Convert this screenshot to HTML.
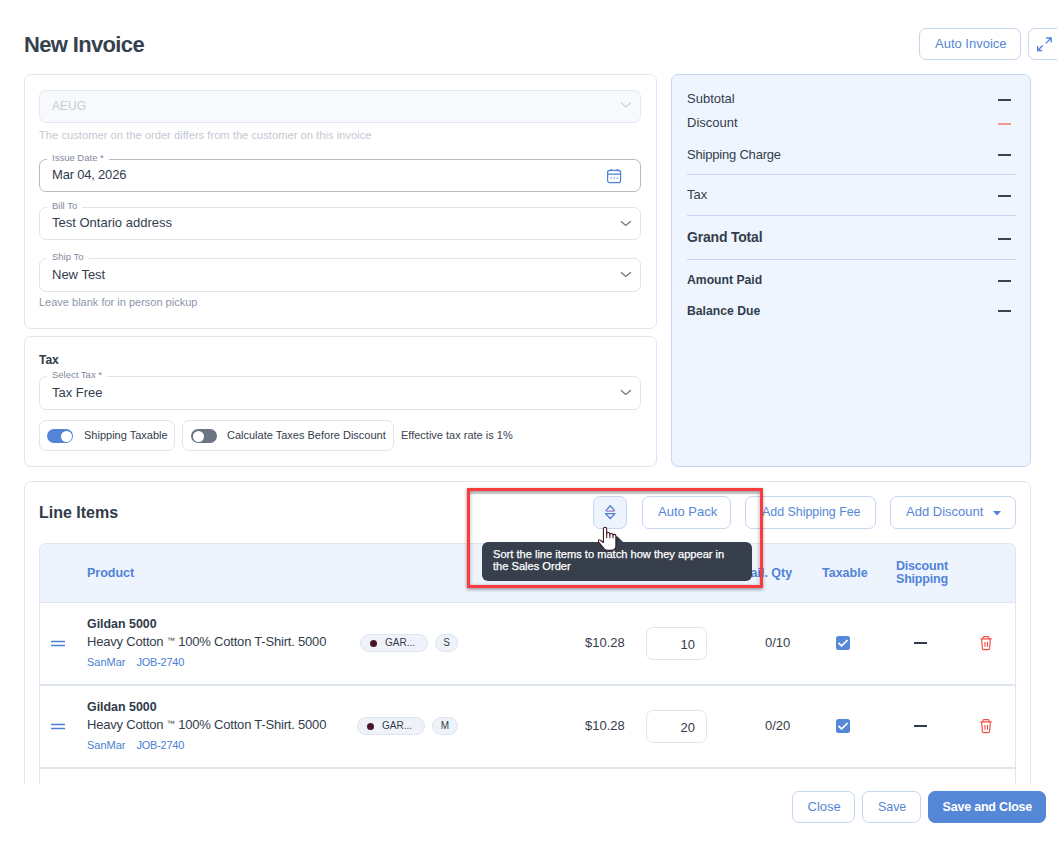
<!DOCTYPE html>
<html><head><meta charset="utf-8">
<style>
*{box-sizing:border-box;margin:0;padding:0}
html,body{width:1057px;height:850px;overflow:hidden;background:#fff;font-family:"Liberation Sans",sans-serif;color:#333d4c}
.a{position:absolute;white-space:nowrap}
.title{left:24px;top:32px;font-size:22px;font-weight:bold;color:#36414f;letter-spacing:-0.65px}
.btn{position:absolute;border:1px solid #c6d6f0;border-radius:7px;background:#fff;color:#5586d6;font-size:13px;white-space:nowrap}
.btn span{position:absolute;top:7px;line-height:16px}
.card{position:absolute;border:1px solid #e0e6f0;border-radius:7px;background:#fff}
.field{position:absolute;left:39px;width:602px;height:33px;border:1px solid #dde4ee;border-radius:7px;background:#fff}
.lbl{position:absolute;left:47px;font-size:9.5px;letter-spacing:0px;color:#7f8a9e;background:#fff;padding:0 5px;line-height:11px}
.val{position:absolute;left:52px;font-size:13px;color:#333d4c;line-height:16px}
.help{position:absolute;left:39px;font-size:11px;color:#8d97aa;line-height:13px}
.sum{position:absolute;left:671px;top:74px;width:360px;height:393px;background:#eff5fe;border:1px solid #c6d6f1;border-radius:7px}
.sr{position:absolute;left:15px;font-size:13px;color:#333d4c;line-height:16px;white-space:nowrap}
.dash{position:absolute;left:326px;width:13px;height:2px;background:#384252}
.hr{position:absolute;left:15px;width:329px;height:1px;background:#c6d6f1}
.chip{position:absolute;height:31px;border:1px solid #e0e6f0;border-radius:7px;background:#fff}
.tg{position:absolute;top:8px;width:26px;height:14px;border-radius:7px}
.tg.on{background:#5384d8}.tg.off{background:#6b7482}
.knob{position:absolute;top:1.5px;width:11px;height:11px;border-radius:50%;background:#fff}
.tg.on .knob{left:13.5px}.tg.off .knob{left:1.5px}
.ct{position:absolute;top:8px;font-size:11px;color:#333d4c;line-height:13px;white-space:nowrap}
.clip{position:absolute;left:0;top:0;width:1057px;height:784px;overflow:hidden}
.tbl{position:absolute;left:39px;top:543px;width:977px;height:60px;background:#eef4fe;border:1px solid #e0e6f0;border-bottom:1px solid #dfe5ef;border-radius:7px 7px 0 0}
.th{position:absolute;font-size:12.5px;font-weight:bold;color:#5083d6;line-height:13.3px;white-space:nowrap}
.row{position:absolute;left:39px;width:977px;height:83px;border:1px solid #e0e6f0;border-top:0;border-bottom:2px solid #dfe5ef;background:#fff}
.row>*{position:absolute;white-space:nowrap}
.drag{left:11px;top:37px}
.nm{left:47px;top:14px;font-size:12.4px;font-weight:bold;color:#2f3a4a;line-height:14px}
.ds{left:47px;top:31px;font-size:13px;color:#333d4c;letter-spacing:-0.2px;line-height:16px}
.ds small{font-size:8px;letter-spacing:0;line-height:0;vertical-align:3.5px}
.lk{left:47px;top:53px;font-size:11px;color:#4a80d2;line-height:13px}
.pill{top:31px;height:18px;border:1px solid #dde5f0;border-radius:9px;background:#eff3f9;font-size:10px;color:#333d4c;line-height:11px}
.dot{position:absolute;left:9px;top:5px;width:7px;height:7px;border-radius:50%;background:#4a1526}
.price{left:545px;top:32px;font-size:13px;color:#333d4c;line-height:16px}
.qty{left:606px;top:24px;width:61px;height:33px;border:1px solid #dfe6f1;border-radius:7px;font-size:13px;color:#333d4c;text-align:right;padding:9px 11px 0 0;line-height:16px}
.av{left:725px;top:32px;font-size:13px;color:#333d4c;line-height:16px}
.cb{left:796px;top:33px;width:14px;height:14px;border-radius:2.5px;background:#5687d8}
.cb svg{display:block}
.rdash{left:874px;top:39px;width:13px;height:2px;background:#2f3a4a}
.trash{left:940px;top:33px}
.tip{position:absolute;left:482px;top:542px;width:270px;height:39px;background:#373f4d;border-radius:6px;color:#fff;font-size:11.1px;line-height:11.7px;padding:7px 0 0 11px;white-space:nowrap;-webkit-text-stroke:0.25px #fff}
.arrow{position:absolute;left:129px;top:-6px;width:0;height:0;border-left:6px solid transparent;border-right:6px solid transparent;border-bottom:6px solid #343d4b}
.redbox{position:absolute;left:467px;top:488px;width:296px;height:100px;border:3px solid #fc3b3e;box-shadow:0 2px 3px rgba(0,0,0,.3),-1px 0 3px rgba(0,0,0,.12),inset 0 3px 1.5px rgba(0,0,0,.24),inset 2px 0 3px rgba(0,0,0,.1),inset -2px 0 3px rgba(0,0,0,.12)}
</style></head>
<body>
<div class="a title">New Invoice</div>
<div class="btn" style="left:919px;top:28px;width:102px;height:32px"><span style="left:15px">Auto Invoice</span></div>
<div class="btn" style="left:1028px;top:28px;width:40px;height:32px">
<svg style="position:absolute;left:-1px;top:-1px" width="32" height="32" viewBox="0 0 32 32" fill="none" stroke="#4f82d8" stroke-width="1.3"><path d="M18.2 10h5v4.5M23.2 10l-5.4 5.4M9.6 18v4.5h4.5M9.6 22.5l5-5"/></svg></div>

<!-- card 1 -->
<div class="card" style="left:24px;top:74px;width:633px;height:255px"></div>
<div class="field" style="top:90px;height:33px;background:#f7f9fc;border-color:#e3e9f2"></div>
<div class="val" style="top:98px;color:#c9ced7;font-size:12px">AEUG</div>
<svg class="a" style="left:620px;top:101px" width="12" height="8" viewBox="0 0 12 8" fill="none" stroke="#d0d5dd" stroke-width="1.3"><path d="M1 1.5l4.7 4.3 5.2-4.3"/></svg>
<div class="help" style="top:129px;color:#c3c9d3;font-size:11.2px">The customer on the order differs from the customer on this invoice</div>

<div class="field" style="top:159px;border-color:#b5b9c0"></div>
<div class="lbl" style="top:152px">Issue Date *</div>
<div class="val" style="top:167px;letter-spacing:-0.2px">Mar 04, 2026</div>
<svg class="a" style="left:606px;top:168px" width="16" height="16" viewBox="0 0 16 16" fill="none" stroke="#4f82d8" stroke-width="1.2"><rect x="1.6" y="2.4" width="13" height="12.2" rx="2.2"/><path d="M1.6 6.1h13M5.3 1v2.2M11.5 1v2.2"/><path d="M4.6 10h1M7.7 10h1M10.7 10h1" stroke-width="1.3"/></svg>

<div class="field" style="top:207px"></div>
<div class="lbl" style="top:200px">Bill To</div>
<div class="val" style="top:215px">Test Ontario address</div>
<svg class="a" style="left:620px;top:220px" width="12" height="8" viewBox="0 0 12 8" fill="none" stroke="#6b7583" stroke-width="1.3"><path d="M1 1.2l4.7 4.3 5.2-4.3"/></svg>

<div class="field" style="top:258px;height:34px"></div>
<div class="lbl" style="top:251px">Ship To</div>
<div class="val" style="top:267px">New Test</div>
<svg class="a" style="left:620px;top:271px" width="12" height="8" viewBox="0 0 12 8" fill="none" stroke="#6b7583" stroke-width="1.3"><path d="M1 1.2l4.7 4.3 5.2-4.3"/></svg>
<div class="help" style="top:296px">Leave blank for in person pickup</div>

<!-- card 2 -->
<div class="card" style="left:24px;top:336px;width:633px;height:131px"></div>
<div class="a" style="left:39px;top:353px;font-size:12px;font-weight:bold;color:#2f3a4a;line-height:14px">Tax</div>
<div class="field" style="top:376px;height:34px"></div>
<div class="lbl" style="top:369px">Select Tax *</div>
<div class="val" style="top:385px">Tax Free</div>
<svg class="a" style="left:620px;top:389px" width="12" height="8" viewBox="0 0 12 8" fill="none" stroke="#6b7583" stroke-width="1.3"><path d="M1 1.2l4.7 4.3 5.2-4.3"/></svg>

<div class="chip" style="left:39px;top:420px;width:136px">
  <div class="tg on" style="left:7px"><div class="knob"></div></div>
  <div class="ct" style="left:44px">Shipping Taxable</div>
</div>
<div class="chip" style="left:182px;top:420px;width:212px">
  <div class="tg off" style="left:8px"><div class="knob"></div></div>
  <div class="ct" style="left:44px">Calculate Taxes Before Discount</div>
</div>
<div class="a" style="left:401px;top:429px;font-size:11px;color:#3a4453;line-height:13px">Effective tax rate is 1%</div>

<!-- summary -->
<div class="sum">
  <div class="sr" style="top:16px">Subtotal</div><div class="dash" style="top:24px"></div>
  <div class="sr" style="top:40px">Discount</div><div class="dash" style="top:48px;background:#f49a8e"></div>
  <div class="sr" style="top:72px;letter-spacing:-0.2px">Shipping Charge</div><div class="dash" style="top:79px"></div>
  <div class="hr" style="top:99px"></div>
  <div class="sr" style="top:112px">Tax</div><div class="dash" style="top:120px"></div>
  <div class="hr" style="top:140px"></div>
  <div class="sr" style="top:154px;font-size:14px;font-weight:bold;letter-spacing:-0.2px;line-height:17px">Grand Total</div><div class="dash" style="top:163px"></div>
  <div class="hr" style="top:184px"></div>
  <div class="sr" style="top:198px;font-size:12.2px;font-weight:bold;line-height:15px">Amount Paid</div><div class="dash" style="top:205px"></div>
  <div class="sr" style="top:228.5px;font-size:12.2px;font-weight:bold;line-height:15px">Balance Due</div><div class="dash" style="top:235px"></div>
</div>

<!-- line items -->
<div class="clip">
  <div class="card" style="left:24px;top:481px;width:1007px;height:400px"></div>
  <div class="a" style="left:39px;top:504px;font-size:16px;font-weight:bold;color:#2f3a4a;line-height:18px">Line Items</div>
  <div class="btn" style="left:593px;top:496px;width:34px;height:33px;background:#eef4fe">
    <svg style="position:absolute;left:6px;top:3px" width="20" height="24" viewBox="0 0 20 24" fill="none" stroke="#4f7fd6" stroke-width="1.3" stroke-linejoin="round"><path d="M5.6 10.9L10.25 5.8 14.9 10.9M5.6 13.7H14.9L10.25 18.5Z"/><path d="M6 11.1H14.5" stroke="#9b87d4" stroke-width="1.4"/></svg>
  </div>
  <div class="btn" style="left:642px;top:496px;width:89px;height:33px"><span style="left:15px">Auto Pack</span></div>
  <div class="btn" style="left:745px;top:496px;width:131px;height:33px"><span style="left:16px;font-size:12.4px">Add Shipping Fee</span></div>
  <div class="btn" style="left:890px;top:496px;width:126px;height:33px"><span style="left:15px">Add Discount</span>
    <svg style="position:absolute;left:102px;top:13.5px" width="8" height="5" viewBox="0 0 8 5"><path d="M0 0h8L4 4.5z" fill="#5083d6"/></svg></div>

  <div class="tbl">
    <div class="th" style="left:47px;top:23px">Product</div>
    <div class="th" style="left:695px;top:23px">Avail. Qty</div>
    <div class="th" style="left:782px;top:23px">Taxable</div>
    <div class="th" style="left:856px;top:15.5px;letter-spacing:-0.2px">Discount<br>Shipping</div>
  </div>

  <div class="row" style="top:603px">
    <svg class="drag" width="14" height="8" viewBox="0 0 14 8"><path d="M0.3 1.5H13.7M0.3 5.5H13.7" stroke="#4f80d6" stroke-width="1.3" stroke-linecap="round"/></svg>
    <div class="nm">Gildan 5000</div>
    <div class="ds">Heavy Cotton <small>&#8482;</small> 100% Cotton T-Shirt. 5000</div>
    <div class="lk">SanMar<span style="margin-left:11px;letter-spacing:-0.25px">JOB-2740</span></div>
    <div class="pill" style="left:320px;width:68px"><span class="dot"></span><span style="position:absolute;left:24px;top:2px">GAR...</span></div>
    <div class="pill" style="left:395px;width:23px;text-align:center;padding-top:2px">S</div>
    <div class="price">$10.28</div>
    <div class="qty">10</div>
    <div class="av">0/10</div>
    <div class="cb"><svg width="14" height="14" viewBox="0 0 14 14"><path d="M2.4 6.9L5.6 9.9 11.7 4" fill="none" stroke="#fff" stroke-width="1.7"/></svg></div>
    <div class="rdash"></div>
    <svg class="trash" width="13" height="15" viewBox="0 0 13 15" fill="none" stroke="#f24d47" stroke-width="1.15"><path d="M0.4 2.8H11.8M3 2.8V1.6a1 1 0 0 1 1-1h4a1 1 0 0 1 1 1V2.8M1.6 2.8l.8 9.6a1.3 1.3 0 0 0 1.3 1.2h4.6a1.3 1.3 0 0 0 1.3-1.2l.8-9.6M5 6v4.8M7.5 6v4.8"/></svg>
  </div>
  <div class="row" style="top:686px">
    <svg class="drag" width="14" height="8" viewBox="0 0 14 8"><path d="M0.3 1.5H13.7M0.3 5.5H13.7" stroke="#4f80d6" stroke-width="1.3" stroke-linecap="round"/></svg>
    <div class="nm">Gildan 5000</div>
    <div class="ds">Heavy Cotton <small>&#8482;</small> 100% Cotton T-Shirt. 5000</div>
    <div class="lk">SanMar<span style="margin-left:11px;letter-spacing:-0.25px">JOB-2740</span></div>
    <div class="pill" style="left:317px;width:68px"><span class="dot"></span><span style="position:absolute;left:24px;top:2px">GAR...</span></div>
    <div class="pill" style="left:392px;width:26px;text-align:center;padding-top:2px">M</div>
    <div class="price">$10.28</div>
    <div class="qty">20</div>
    <div class="av">0/20</div>
    <div class="cb"><svg width="14" height="14" viewBox="0 0 14 14"><path d="M2.4 6.9L5.6 9.9 11.7 4" fill="none" stroke="#fff" stroke-width="1.7"/></svg></div>
    <div class="rdash"></div>
    <svg class="trash" width="13" height="15" viewBox="0 0 13 15" fill="none" stroke="#f24d47" stroke-width="1.15"><path d="M0.4 2.8H11.8M3 2.8V1.6a1 1 0 0 1 1-1h4a1 1 0 0 1 1 1V2.8M1.6 2.8l.8 9.6a1.3 1.3 0 0 0 1.3 1.2h4.6a1.3 1.3 0 0 0 1.3-1.2l.8-9.6M5 6v4.8M7.5 6v4.8"/></svg>
  </div>
  <div class="row" style="top:769px"></div>
</div>

<!-- footer -->
<div class="btn" style="left:792px;top:791px;width:63px;height:32px"><span style="left:14.5px">Close</span></div>
<div class="btn" style="left:862px;top:791px;width:59px;height:32px"><span style="left:15px;font-size:12.4px">Save</span></div>
<div class="btn" style="left:928px;top:791px;width:118px;height:32px;background:#5687d7;border-color:#5687d7;color:#fff;font-weight:bold"><span style="left:13.5px;font-size:12.5px;letter-spacing:-0.2px">Save and Close</span></div>

<!-- tooltip + annotation -->
<div class="tip"><div class="arrow"></div>Sort the line items to match how they appear in<br>the Sales Order</div>
<div class="redbox"></div>
<svg class="a" style="left:596px;top:525px" width="22" height="27" viewBox="0 0 22 27">
  <path d="M7.4 17.5V3.9a1.65 1.65 0 0 1 3.3 0V9a1.55 1.55 0 0 1 3.1 0V10a1.6 1.6 0 0 1 3.2 0V10.8a1.45 1.45 0 0 1 2.9 0V21C19.9 23.8 17.8 25.3 15 25.3H11.5C10 25.3 9 24.6 8 23.5L2.6 17C1.7 15.9 2.8 14.2 4.2 15.1Z" fill="#fff" stroke="#3a0a1a" stroke-width="1.05" stroke-linejoin="round"/>
  <path d="M10.7 9V13.2M13.8 10V13.2M17 10.8V13.2" stroke="#3a0a1a" stroke-width="1"/>
</svg>
</body></html>
